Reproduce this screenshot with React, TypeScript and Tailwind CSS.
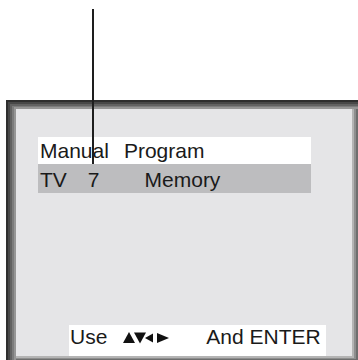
const Arrows = () => (
  <svg width="46" height="12" viewBox="0 0 46 12" className="block">
    <polygon points="0,11 6,0 12,11" fill="#111111" />
    <polygon points="11,0.5 23,0.5 17,11.5" fill="#111111" />
    <polygon points="22,6 30,1.5 30,10.5" fill="#111111" />
    <polygon points="34,1 46,6 34,11" fill="#111111" />
  </svg>
);

const App = () => {
  return (
    <div className="relative w-[358px] h-[360px] overflow-hidden bg-white text-[#1a1a1a] font-['Liberation_Sans',Arial,sans-serif] text-[21px]">
      {/* callout line */}
      <div className="absolute left-[92px] top-[9px] z-10 w-[2px] h-[155px] bg-[#1e1e1e]" />

      <div className="pt-[100px] pl-[6px]">
        <div className="flex flex-col w-[352px] h-[260px] bg-[#e5e5e7] shadow-[inset_2px_2px_0_#2e2e2e,inset_4px_4px_0_#484848,inset_6px_6px_0_#626262,inset_8px_7px_0_#7c7c7c,inset_10px_9px_0_#969696,inset_-2px_-1px_0_#6e6e6e,inset_-4px_-2px_0_#8e8e8e,inset_-6px_-4px_0_#b4b4b4]">
          <div className="mt-[37px] ml-[32px] w-[273px]">
            <div className="flex h-[27px] leading-[27px] pl-[2px] bg-white">
              <span>Manual</span>
              <span className="ml-[15px]">Program</span>
            </div>
            <div className="flex h-[29px] leading-[29px] pt-[1px] pl-[2px] bg-[#bdbdbf]">
              <span>TV</span>
              <span className="ml-[21px]">7</span>
              <span className="ml-[45px]">Memory</span>
            </div>
          </div>

          <div className="mt-auto mb-[4px] ml-[63px] flex items-start w-[257px] h-[31px] pt-[1px] pl-[1px] leading-[21px] bg-white">
            <span>Use</span>
            <span className="ml-[16px] mt-[6px]">
              <Arrows />
            </span>
            <span className="ml-[37px]">And ENTER</span>
          </div>
        </div>
      </div>
    </div>
  );
};

export default App;
